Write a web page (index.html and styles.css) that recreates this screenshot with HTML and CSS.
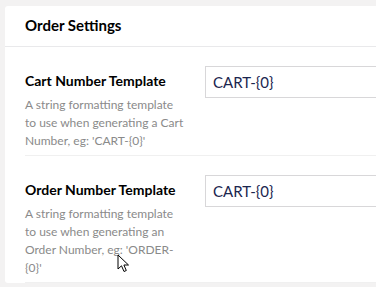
FILE: index.html
```html
<!DOCTYPE html>
<html lang="en">
<head>
    <meta charset="UTF-8">
    <title>Order Settings</title>
    <link rel="stylesheet" href="styles.css">
</head>
<body>
    <div class="panel">
        <div class="panel-header">Order Settings</div>
        <div class="panel-body">
            <div class="control-group">
                <div class="control-label">
                    <div class="label-title">Cart Number Template</div>
                    <div class="label-desc">A string formatting template to use when generating a Cart Number, eg: 'CART-{0}'</div>
                </div>
                <input class="text-input" type="text" value="CART-{0}">
            </div>
            <div class="control-group">
                <div class="control-label">
                    <div class="label-title">Order Number Template</div>
                    <div class="label-desc">A string formatting template to use when generating an Order Number, eg: 'ORDER-{0}'</div>
                </div>
                <input class="text-input" type="text" value="CART-{0}">
            </div>
        </div>
    </div>

    <svg class="cursor" width="13" height="20" viewBox="0 0 13 20">
        <path d="M1 1 L1 15 L4.5 11.8 L7 17.5 L9.3 16.5 L6.9 11 L11.5 11 Z" fill="#fff" stroke="#000" stroke-width="1" stroke-linejoin="round"/>
    </svg>
</body>
</html>
```

FILE: styles.css
```css
body {
    margin: 0;
    background-color: #f3f2f2;
    font-family: Lato, "Open Sans", sans-serif;
    overflow: hidden;
}

.panel {
    margin: 6px 0 0 5px;
    width: 420px;
    background-color: #fff;
    border-radius: 3px;
}

.panel-header {
    height: 40px;
    line-height: 39px;
    padding: 0 20px;
    font-size: 15px;
    font-weight: bold;
    color: #000;
    border-bottom: 1px solid #e9e9eb;
}

.panel-body {
    padding: 0 20px;
}

.control-group {
    display: flex;
    gap: 20px;
    padding: 19px 0 5px;
    border-bottom: 1px solid #f0f0f0;
}

.control-label {
    width: 160px;
    flex-shrink: 0;
    padding-top: 5px;
}

.label-title {
    font-size: 14px;
    font-weight: bold;
    line-height: 20px;
    color: #000;
    margin-bottom: 5px;
}

.label-desc {
    font-size: 12px;
    line-height: 18px;
    color: #8a8a8a;
}

.text-input {
    width: 300px;
    height: 32px;
    box-sizing: border-box;
    padding: 0 7px;
    border: 1px solid #d8d7d9;
    font-family: Lato, "Open Sans", sans-serif;
    font-size: 15px;
    color: #1b264f;
    outline: none;
}

.cursor {
    position: absolute;
    left: 117px;
    top: 254px;
}
```
